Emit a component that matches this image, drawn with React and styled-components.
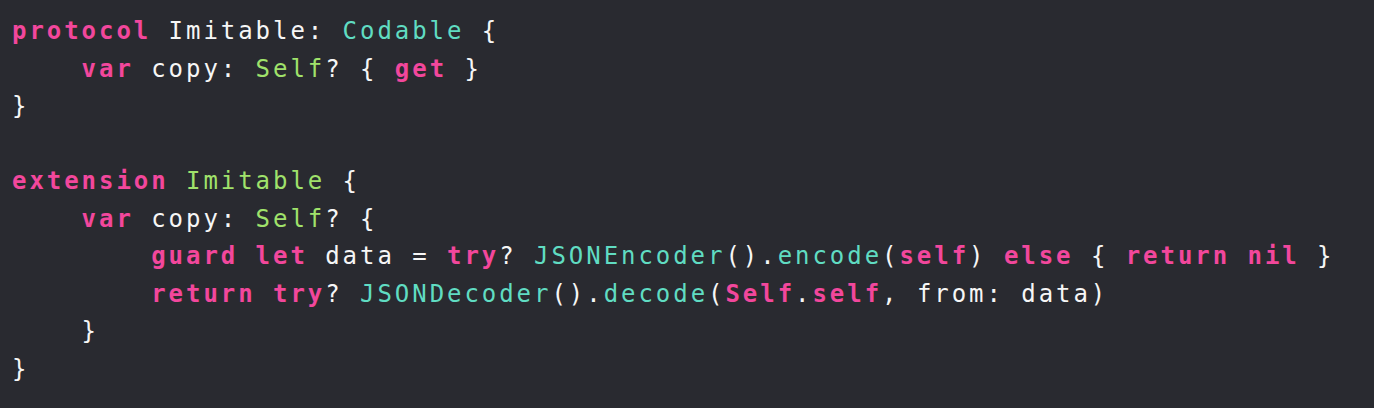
import React from "react";
import styled, { createGlobalStyle } from "styled-components";

const GlobalStyle = createGlobalStyle`
  html, body {
    margin: 0;
    padding: 0;
    background: #292a30;
  }
`;

const colors = {
  keyword: "#f2479c",
  type: "#60dcc2",
  project: "#a0e26b",
  plain: "#f6f6f6",
};

const Editor = styled.div`
  width: 1374px;
  height: 408px;
  box-sizing: border-box;
  padding: 13px 0 0 12px;
  background: #292a30;
  font-family: "DejaVu Sans Mono", "Liberation Mono", monospace;
  font-size: 24px;
  letter-spacing: 2.95px;
  color: ${colors.plain};
  overflow: hidden;
`;

const Line = styled.div`
  height: 37.55px;
  line-height: 37.55px;
  white-space: pre;
`;

const Tok = styled.span`
  color: ${(p) => colors[p.kind] || colors.plain};
  font-weight: ${(p) => (p.kind === "keyword" ? 700 : 400)};
`;

// each line: list of [kind, text]
const code = [
  [["keyword", "protocol"], ["plain", " Imitable: "], ["type", "Codable"], ["plain", " {"]],
  [["plain", "    "], ["keyword", "var"], ["plain", " copy: "], ["project", "Self"], ["plain", "? { "], ["keyword", "get"], ["plain", " }"]],
  [["plain", "}"]],
  [],
  [["keyword", "extension"], ["plain", " "], ["project", "Imitable"], ["plain", " {"]],
  [["plain", "    "], ["keyword", "var"], ["plain", " copy: "], ["project", "Self"], ["plain", "? {"]],
  [
    ["plain", "        "], ["keyword", "guard"], ["plain", " "], ["keyword", "let"], ["plain", " data = "],
    ["keyword", "try"], ["plain", "? "], ["type", "JSONEncoder"], ["plain", "()."], ["type", "encode"],
    ["plain", "("], ["keyword", "self"], ["plain", ") "], ["keyword", "else"], ["plain", " { "],
    ["keyword", "return"], ["plain", " "], ["keyword", "nil"], ["plain", " }"],
  ],
  [
    ["plain", "        "], ["keyword", "return"], ["plain", " "], ["keyword", "try"], ["plain", "? "],
    ["type", "JSONDecoder"], ["plain", "()."], ["type", "decode"], ["plain", "("], ["keyword", "Self"],
    ["plain", "."], ["keyword", "self"], ["plain", ", from: data)"],
  ],
  [["plain", "    }"]],
  [["plain", "}"]],
];

export default function App() {
  return (
    <>
      <GlobalStyle />
      <Editor>
        {code.map((line, i) => (
          <Line key={i}>
            {line.length === 0
              ? " "
              : line.map(([kind, text], j) => (
                  <Tok key={j} kind={kind}>
                    {text}
                  </Tok>
                ))}
          </Line>
        ))}
      </Editor>
    </>
  );
}
